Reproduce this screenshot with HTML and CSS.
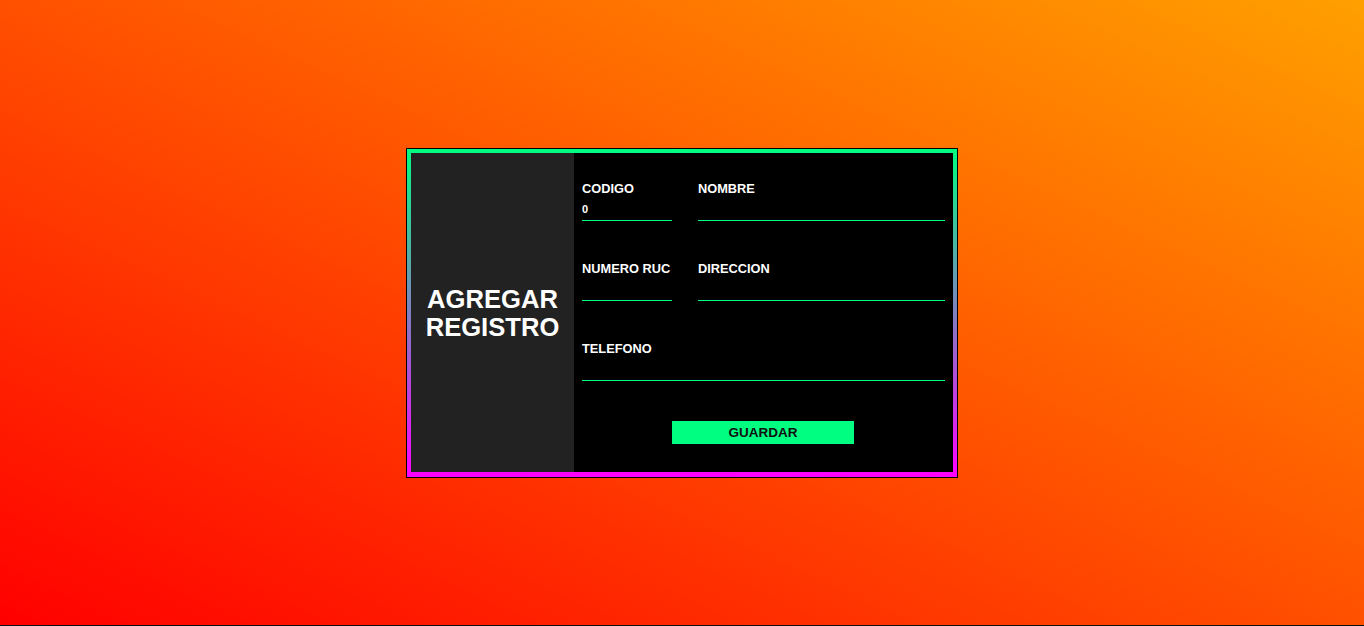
FILE: index.html
```html
<!DOCTYPE html>
<html lang="es">
<head>
<meta charset="utf-8">
<title>Agregar Registro</title>
<link rel="stylesheet" href="styles.css">
</head>
<body>
<div class="card">
  <div class="frame">
    <div class="side">
      <h1 class="title">AGREGAR<br>REGISTRO</h1>
    </div>
    <form class="form">
      <div class="grid">
        <label class="field">
          <span class="label">CODIGO</span>
          <input class="input" type="text" value="0">
        </label>
        <label class="field">
          <span class="label">NOMBRE</span>
          <input class="input" type="text">
        </label>
        <label class="field">
          <span class="label">NUMERO RUC</span>
          <input class="input" type="text">
        </label>
        <label class="field">
          <span class="label">DIRECCION</span>
          <input class="input" type="text">
        </label>
        <label class="field wide">
          <span class="label">TELEFONO</span>
          <input class="input" type="text">
        </label>
      </div>
      <div class="actions">
        <button class="btn" type="button">GUARDAR</button>
      </div>
    </form>
  </div>
</div>
</body>
</html>
```
FILE: styles.css
```css
html {
  background: #111;
  height: 100%;
}
body {
  margin: 0;
  height: 625px;
  background: linear-gradient(to top right, #ff0000, #ffa000);
  display: flex;
  align-items: center;
  justify-content: center;
  font-family: "Liberation Sans", Arial, sans-serif;
}
.card {
  border: 1px solid #000;
  margin-top: 1px;
}
.frame {
  display: flex;
  width: 542px;
  padding: 4px;
  padding-bottom: 5px;
  background: linear-gradient(to bottom, #00ff80, #ff00ff);
}
.side {
  width: 163px;
  background: #222;
  display: flex;
  align-items: center;
  justify-content: center;
}
.title {
  margin: 0;
  color: #fff;
  font-size: 25.6px;
  line-height: 28px;
  font-weight: bold;
  text-align: center;
}
.form {
  flex: 1;
  background: #000;
  padding: 28px 8px 28px 8px;
  display: flex;
  flex-direction: column;
}
.grid {
  display: grid;
  grid-template-columns: 90px 1fr;
  column-gap: 26px;
  row-gap: 40px;
}
.field {
  display: flex;
  flex-direction: column;
}
.wide {
  grid-column: 1 / span 2;
}
.label {
  color: #fff;
  font-size: 12.8px;
  line-height: 16px;
  font-weight: bold;
}
.input {
  box-sizing: border-box;
  height: 24px;
  margin: 0;
  padding: 0;
  border: none;
  border-bottom: 1px solid #00ff80;
  background: transparent;
  color: #fff;
  font-family: "Liberation Sans", Arial, sans-serif;
  font-size: 11px;
  font-weight: bold;
  outline: none;
  width: 100%;
}
.actions {
  display: flex;
  justify-content: center;
  margin-top: 40px;
}
.btn {
  width: 182px;
  height: 23px;
  margin-right: 1px;
  border: none;
  padding: 0;
  background: #00ff80;
  color: #111;
  font-family: "Liberation Sans", Arial, sans-serif;
  font-size: 13.5px;
  font-weight: bold;
}
```
